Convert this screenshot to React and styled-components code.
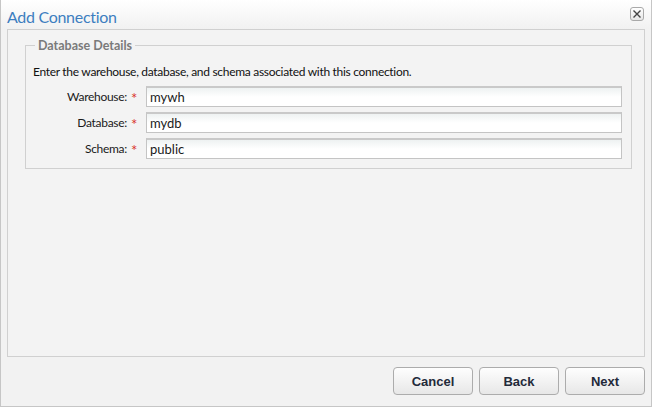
import styled, { createGlobalStyle } from 'styled-components';

const GlobalStyle = createGlobalStyle`
  html, body {
    margin: 0;
    padding: 0;
    background: #ffffff;
  }
  body {
    font-family: Lato, "Noto Sans", "DejaVu Sans", sans-serif;
  }
`;

const Window = styled.div`
  width: 652px;
  height: 407px;
  box-sizing: border-box;
  border: 1px solid #c6c6c6;
  border-top: none;
  background: #f2f2f2;
  display: flex;
  flex-direction: column;
`;

const TitleBar = styled.div`
  height: 29px;
  flex: none;
  display: flex;
  align-items: center;
  justify-content: space-between;
  padding: 0 7px 0 6px;
  background: linear-gradient(#ffffff, #f1f1f1);
`;

const Title = styled.div`
  font-size: 16px;
  letter-spacing: -0.3px;
  color: #3d7ec0;
  margin-top: 3px;
`;

const CloseButton = styled.button`
  width: 14px;
  height: 14px;
  padding: 0;
  margin-top: -1px;
  border: 1px solid #a9a9a9;
  border-radius: 3px;
  background: linear-gradient(#ffffff, #e6e6e6);
  display: flex;
  align-items: center;
  justify-content: center;
`;

const Body = styled.div`
  flex: 1;
  margin: 0 6px;
  border: 1px solid #d0d0d0;
  background: #f3f3f3;
  padding: 8px 12px 0 17px;
`;

const Fieldset = styled.fieldset`
  margin: 0;
  border: 1px solid #d0d0d0;
  padding: 2px 9px 9px 7px;
`;

const Legend = styled.legend`
  font-size: 12.5px;
  font-weight: bold;
  color: #7a7a7a;
  padding: 0 3px;
  margin-left: 2px;
`;

const Description = styled.div`
  font-size: 12px;
  letter-spacing: -0.3px;
  color: #111;
  line-height: 15px;
  margin: 9px 0 7px 0;
`;

const Rows = styled.div`
  display: grid;
  grid-template-columns: 94px 20px 1fr;
  row-gap: 5px;
  align-items: center;
`;

const Label = styled.label`
  font-size: 12px;
  letter-spacing: -0.3px;
  color: #1a1a1a;
  text-align: right;
`;

const Required = styled.span`
  color: #d9342b;
  font-size: 15px;
  line-height: 14px;
  padding: 3px 0 0 4px;
`;

const Input = styled.input`
  height: 21px;
  box-sizing: border-box;
  margin-left: -1px;
  border: 1px solid #c4c4c4;
  border-top: 2px solid #c9c9c9;
  background: linear-gradient(#eef2f2, #ffffff 50%);
  font-family: Lato, "Noto Sans", sans-serif;
  font-size: 13px;
  color: #1a1a1a;
  padding: 0 3px;
  outline: none;
`;

const Footer = styled.div`
  height: 49px;
  flex: none;
  display: flex;
  justify-content: flex-end;
  align-items: flex-start;
  gap: 6px;
  padding: 10px 6px 0 0;
  box-sizing: border-box;
`;

const Button = styled.button`
  width: 80px;
  height: 28px;
  border: 1px solid #acacac;
  border-radius: 4px;
  background: linear-gradient(#fefefe, #e7e7e7);
  font-family: "Liberation Sans", Arial, sans-serif;
  font-size: 13px;
  font-weight: bold;
  color: #232a3a;
  padding: 0;
`;

const fields = [
  { label: 'Warehouse:', value: 'mywh' },
  { label: 'Database:', value: 'mydb' },
  { label: 'Schema:', value: 'public' },
];

export default function App() {
  return (
    <>
      <GlobalStyle />
      <Window>
        <TitleBar>
          <Title>Add Connection</Title>
          <CloseButton aria-label="Close">
            <svg width="10" height="10" viewBox="0 0 10 10">
              <path d="M1.5 1.5 L8.5 8.5 M8.5 1.5 L1.5 8.5" stroke="#444" strokeWidth="1.4" />
            </svg>
          </CloseButton>
        </TitleBar>
        <Body>
          <Fieldset>
            <Legend>Database Details</Legend>
            <Description>
              Enter the warehouse, database, and schema associated with this connection.
            </Description>
            <Rows>
              {fields.map((f) => [
                <Label key={f.label + 'l'}>{f.label}</Label>,
                <Required key={f.label + 's'}>*</Required>,
                <Input key={f.label + 'i'} defaultValue={f.value} />,
              ])}
            </Rows>
          </Fieldset>
        </Body>
        <Footer>
          <Button>Cancel</Button>
          <Button>Back</Button>
          <Button>Next</Button>
        </Footer>
      </Window>
    </>
  );
}
